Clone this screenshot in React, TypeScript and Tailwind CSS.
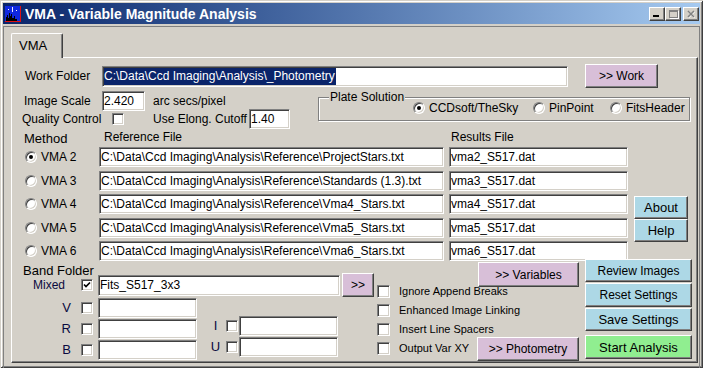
import React from "react";

const raised =
  "flex items-center justify-center shrink-0 border border-t-white border-l-white border-r-[#404040] border-b-[#404040] shadow-[inset_-1px_-1px_0_#808080] text-black leading-none";
const sunken =
  "flex items-center shrink-0 bg-white border border-t-[#808080] border-l-[#808080] border-r-white border-b-white shadow-[inset_1px_1px_0_#404040,inset_-1px_-1px_0_#d4d0c8] overflow-hidden whitespace-nowrap text-[12px] text-black pl-[1px]";

function Field({ value = "", className = "", selected = false }: { value?: string; className?: string; selected?: boolean }) {
  return (
    <div className={`${sunken} ${className}`}>
      {selected ? <span className="bg-[#0a246a] text-white leading-[17px] inline-block pr-[1px]">{value}</span> : value}
    </div>
  );
}

function Btn({ children, className = "" }: { children: React.ReactNode; className?: string }) {
  return <div className={`${raised} ${className}`}>{children}</div>;
}

function Check({ checked = false, big = false, className = "" }: { checked?: boolean; big?: boolean; className?: string }) {
  return (
    <div
      className={`${big ? "w-[13px] h-[13px]" : "w-[12px] h-[12px]"} shrink-0 bg-white border border-t-[#808080] border-l-[#808080] border-r-white border-b-white shadow-[inset_1px_1px_0_#404040,inset_-1px_-1px_0_#d4d0c8] flex items-center justify-center ${className}`}
    >
      {checked && (
        <svg width="8" height="8" viewBox="0 0 8 8">
          <path d="M1 3.5 L3 5.5 L7 1.5" stroke="#000" strokeWidth="1.7" fill="none" />
        </svg>
      )}
    </div>
  );
}

function Radio({ checked = false }: { checked?: boolean }) {
  return (
    <div className="w-[12px] h-[12px] shrink-0 rounded-full bg-white border border-t-[#808080] border-l-[#808080] border-r-white border-b-white shadow-[inset_1px_1px_0_#404040,inset_-1px_-1px_0_#d4d0c8] flex items-center justify-center">
      {checked && <div className="w-[4px] h-[4px] rounded-full bg-black" />}
    </div>
  );
}

function RadioItem({ label, checked = false, className = "" }: { label: string; checked?: boolean; className?: string }) {
  return (
    <div className={`flex items-center shrink-0 ${className}`}>
      <Radio checked={checked} />
      <span className="ml-[4px]">{label}</span>
    </div>
  );
}

function AppIcon() {
  return (
    <svg width="16" height="16" viewBox="0 0 16 16" className="ml-[2px] shrink-0">
      <rect width="16" height="16" fill="#1028e0" />
      <path d="M1 15 V11 H2 V9 H3 V12 H4 V7 H5 V10 H6 V8 H7 V12 H9 V10 H10 V13 H12 V15 Z" fill="#000" />
      <rect x="7" y="1" width="1" height="5" fill="#e8e8ff" />
      <rect x="3" y="3" width="1" height="1" fill="#fff" />
      <rect x="11" y="4" width="1" height="1" fill="#fff" />
      <rect x="15" y="0" width="1" height="16" fill="#e01010" />
      <rect x="0" y="15" width="16" height="1" fill="#e01010" />
    </svg>
  );
}

const vmaRows = [
  { n: "VMA 2", ref: "C:\\Data\\Ccd Imaging\\Analysis\\Reference\\ProjectStars.txt", res: "vma2_S517.dat", on: true },
  { n: "VMA 3", ref: "C:\\Data\\Ccd Imaging\\Analysis\\Reference\\Standards (1.3).txt", res: "vma3_S517.dat" },
  { n: "VMA 4", ref: "C:\\Data\\Ccd Imaging\\Analysis\\Reference\\Vma4_Stars.txt", res: "vma4_S517.dat" },
  { n: "VMA 5", ref: "C:\\Data\\Ccd Imaging\\Analysis\\Reference\\Vma5_Stars.txt", res: "vma5_S517.dat" },
  { n: "VMA 6", ref: "C:\\Data\\Ccd Imaging\\Analysis\\Reference\\Vma6_Stars.txt", res: "vma6_S517.dat" },
];

const options = ["Ignore Append Breaks", "Enhanced Image Linking", "Insert Line Spacers", "Output Var XY"];

export default function App() {
  return (
    <div className="w-[703px] h-[368px] bg-[#d4d0c8] font-['Liberation_Sans',Arial,sans-serif] text-black whitespace-nowrap flex flex-col overflow-hidden shadow-[inset_1px_1px_0_#d4d0c8,inset_-1px_-1px_0_#404040,inset_2px_2px_0_#fff,inset_-2px_-2px_0_#808080]">
      {/* title bar */}
      <div className="mx-[3px] mt-[3px] h-[21px] shrink-0 flex items-center bg-linear-to-r from-[#0a246a] to-[#a6caf0]">
        <AppIcon />
        <span className="ml-[4px] text-white font-bold text-[14px] leading-none">VMA - Variable Magnitude Analysis</span>
        <div className="ml-auto mr-[1px] mt-[1px] flex items-center">
          <Btn className="w-[16px] h-[14px] bg-[#d4d0c8] !items-end !justify-start pl-[3px] pb-[3px]">
            <div className="w-[6px] h-[2px] bg-black" />
          </Btn>
          <Btn className="w-[16px] h-[14px] bg-[#d4d0c8]">
            <div className="w-[9px] h-[8px] border border-t-2 border-[#808080] shadow-[1px_1px_0_#fff]" />
          </Btn>
          <Btn className="ml-[2px] w-[16px] h-[14px] bg-[#d4d0c8]">
            <svg width="9" height="8" viewBox="0 0 9 8">
              <path d="M1.5 1.5 L7.5 7.5 M7.5 1.5 L1.5 7.5" stroke="#fff" strokeWidth="1.6" />
              <path d="M1 1 L7 7 M7 1 L1 7" stroke="#808080" strokeWidth="1.6" />
            </svg>
          </Btn>
        </div>
      </div>

      {/* client area */}
      <div className="mx-[3px] mt-[2px] flex-1 border-t border-l border-r border-[#808080] flex flex-col">
        <div className="pl-[7px] pt-[6px] flex">
          <div className="relative z-10 w-[52px] h-[25px] bg-[#d4d0c8] border-t border-l border-r border-t-white border-l-white border-r-[#404040] shadow-[inset_-1px_0_0_#808080] rounded-t-[2px] pl-[7px] pt-[4px] text-[13px] leading-[15px]">
            VMA
          </div>
        </div>

        {/* tab panel */}
        <div className="ml-[7px] mt-[-1px] w-[687px] h-[306px] border border-t-white border-l-white border-r-[#404040] border-b-[#404040] shadow-[inset_-1px_-1px_0_#808080] flex flex-col text-[12px]">
          {/* work folder */}
          <div className="mt-[6px] h-[24px] flex items-center pl-[13px]">
            <span className="w-[77px] shrink-0">Work Folder</span>
            <Field className="w-[466px] h-[21px]" value="C:\Data\Ccd Imaging\Analysis\_Photometry" selected />
            <Btn className="ml-[17px] w-[73px] h-[24px] bg-[#d8bfd8] text-[12px]">&gt;&gt; Work</Btn>
          </div>

          {/* scale / quality / plate solution */}
          <div className="mt-[2px] flex">
            <div className="w-[306px] shrink-0 flex flex-col">
              <div className="mt-[1px] h-[20px] flex items-center pl-[12px]">
                <span className="w-[78px] shrink-0">Image Scale</span>
                <Field className="w-[43px] h-[20px]" value="2.420" />
                <span className="ml-[8px]">arc secs/pixel</span>
              </div>
              <div className="mt-[-2px] h-[20px] flex items-center pl-[10px]">
                <span className="w-[90px] shrink-0">Quality Control</span>
                <Check />
                <span className="ml-[29px] w-[96px] shrink-0">Use Elong. Cutoff</span>
                <Field className="w-[41px] h-[20px]" value="1.40" />
              </div>
            </div>
            <div className="mt-[7px] w-[372px] h-[24px] relative border border-[#808080] shadow-[inset_1px_1px_0_#fff,1px_1px_0_#fff] flex items-center pb-[2px] pl-[94px]">
              <span className="absolute left-[10px] top-[-8px] px-[1px] bg-[#d4d0c8] leading-[14px]">Plate Solution</span>
              <RadioItem checked label="CCDsoft/TheSky" className="w-[120px]" />
              <RadioItem label="PinPoint" className="w-[77px]" />
              <RadioItem label="FitsHeader" />
            </div>
          </div>

          {/* headers */}
          <div className="mt-[1px] h-[17px] flex pl-[12px]">
            <span className="w-[80px] shrink-0 text-[13px] leading-[15px] mt-[1px]">Method</span>
            <span className="w-[347px] shrink-0 leading-[14px]">Reference File</span>
            <span className="leading-[14px]">Results File</span>
          </div>

          {/* vma rows */}
          <div className="flex">
            <div className="flex flex-col gap-[3.5px]">
              {vmaRows.map((r) => (
                <div key={r.n} className="h-[20px] flex items-center pl-[13px]">
                  <Radio checked={r.on} />
                  <span className="ml-[4px] w-[58px] shrink-0">{r.n}</span>
                  <Field className="w-[345px] h-[20px]" value={r.ref} />
                  <Field className="ml-[5px] w-[179px] h-[20px]" value={r.res} />
                </div>
              ))}
            </div>
            <div className="ml-[6px] mt-[49px] flex flex-col">
              <Btn className="w-[54px] h-[23px] bg-[#add8e6] text-[13px]">About</Btn>
              <Btn className="w-[54px] h-[23px] bg-[#add8e6] text-[13px]">Help</Btn>
            </div>
          </div>

          {/* bottom section */}
          <div className="mt-[-2px] flex items-start">
            <div className="w-[362px] shrink-0 pl-[11px] flex flex-col">
              <span className="mt-[4px] text-[13px] leading-[15px]">Band Folder</span>
              <div className="mt-[-5px] h-[24px] flex items-center text-[#0a0a40]">
                <span className="pl-[10px] w-[58px] shrink-0">Mixed</span>
                <Check checked />
                <Field className="ml-[5px] w-[242px] h-[21px]" value="Fits_S517_3x3" />
                <Btn className="ml-[2px] w-[32px] h-[24px] bg-[#d8bfd8] text-[12px]">&gt;&gt;</Btn>
              </div>
              <div className="mt-[1px] flex">
                <div className="flex flex-col gap-[1px]">
                  {["V", "R", "B"].map((b) => (
                    <div key={b} className="h-[20px] flex items-center">
                      <span className="w-[48px] shrink-0 text-right text-[13px] text-[#0a0a40]">{b}</span>
                      <Check className="ml-[10px]" />
                      <Field className="ml-[5px] w-[99px] h-[20px]" />
                    </div>
                  ))}
                </div>
                <div className="ml-[13px] mt-[18px] flex flex-col gap-[1px]">
                  {["I", "U"].map((b) => (
                    <div key={b} className="h-[20px] flex items-center">
                      <span className="w-[11px] shrink-0 text-center text-[13px] text-[#0a0a40]">{b}</span>
                      <Check className="ml-[5px]" />
                      <Field className="ml-[1px] w-[99px] h-[20px]" />
                    </div>
                  ))}
                </div>
              </div>
            </div>

            <div className="ml-[3px] w-[202px] shrink-0 flex flex-col">
              <Btn className="self-end mt-[3px] w-[101px] h-[25px] bg-[#d8bfd8] text-[12px]">&gt;&gt; Variables</Btn>
              <div className="mt-[-5px] flex flex-col">
                {options.map((o, i) => (
                  <div key={o} className="h-[19px] flex items-center">
                    <Check big />
                    <span className="ml-[9px] text-[11px]">{o}</span>
                    {i === 3 && (
                      <Btn className="ml-auto w-[102px] h-[24px] bg-[#d8bfd8] text-[12px]">&gt;&gt; Photometry</Btn>
                    )}
                  </div>
                ))}
              </div>
            </div>

            <div className="ml-[6px] w-[107px] shrink-0 flex flex-col">
              <Btn className="w-[107px] h-[23px] bg-[#add8e6] text-[12px]">Review Images</Btn>
              <Btn className="mt-[1px] w-[107px] h-[24px] bg-[#add8e6] text-[12px]">Reset Settings</Btn>
              <Btn className="mt-[1px] w-[107px] h-[23px] bg-[#add8e6] text-[13px]">Save Settings</Btn>
              <Btn className="mt-[4px] w-[107px] h-[24px] bg-[#90ee90] text-[13px]">Start Analysis</Btn>
            </div>
          </div>
        </div>
      </div>
    </div>
  );
}
